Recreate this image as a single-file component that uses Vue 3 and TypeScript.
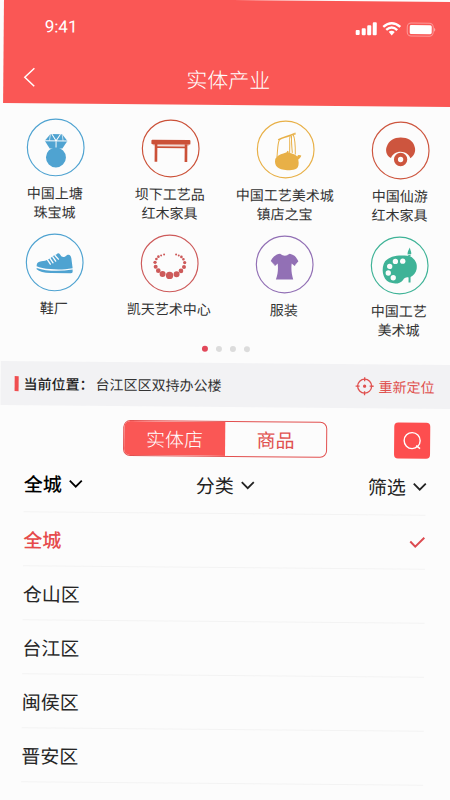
<script setup lang="ts">
import { ref } from 'vue'

interface Category {
  icon: string
  color: string
  lines: string[]
}

const categories: Category[] = [
  { icon: 'ring', color: '#4fa3d1', lines: ['中国上塘', '珠宝城'] },
  { icon: 'table', color: '#cb5138', lines: ['坝下工艺品', '红木家具'] },
  { icon: 'teapot', color: '#e8b047', lines: ['中国工艺美术城', '镇店之宝'] },
  { icon: 'mushroom', color: '#cd553e', lines: ['中国仙游', '红木家具'] },
  { icon: 'shoe', color: '#4fa3d1', lines: ['鞋厂'] },
  { icon: 'necklace', color: '#cd5a5a', lines: ['凯天艺术中心'] },
  { icon: 'shirt', color: '#9270b5', lines: ['服装'] },
  { icon: 'palette', color: '#3fb397', lines: ['中国工艺', '美术城'] },
]

const beads: number[][] = [
  [87, 123, 11], [66, 119, 9], [108, 119, 9], [53, 109, 7], [121, 109, 7],
  [45, 97, 6], [130, 97, 6], [43, 84, 5], [132, 84, 5], [47, 74, 4], [128, 74, 4],
  [53, 67, 4], [122, 67, 4], [61, 63, 3], [114, 63, 3], [70, 60, 3], [106, 60, 3],
]

const tabs = ['实体店', '商品']
const filters = ['全城', '分类', '筛选']
const areas = ['全城', '仓山区', '台江区', '闽侯区', '晋安区']

const activeTab = ref(0)
const activeFilter = ref(0)
const activeArea = ref(0)
const activeDot = ref(0)
</script>

<template>
  <div class="viewport">
    <main class="page">
      <header class="header">
        <div class="status">
          <span class="time">9:41</span>
          <svg class="status-icons" viewBox="0 0 80 16" aria-hidden="true">
            <g fill="#fff">
              <rect x="0" y="9" width="4" height="5" rx="1" />
              <rect x="6" y="7" width="4" height="7" rx="1" />
              <rect x="11.500" y="4" width="4" height="10" rx="1" />
              <rect x="17" y="1" width="4" height="13" rx="1" />
              <rect x="54" y="3.500" width="22" height="9" rx="1.500" />
              <path d="M78.500 6q2 2 0 4z" opacity=".6" />
              <path d="M33 10.500q3-2.400 6 0l-3 3.500z" />
            </g>
            <rect x="51.500" y="1.500" width="26" height="13" rx="4" fill="none" stroke="#fff" opacity=".4" />
            <g fill="none" stroke="#fff" stroke-width="2.400">
              <path d="M27.500 5.500q8.500-7.500 17 0" />
              <path d="M30.500 8.600q5.500-4.800 11 0" />
            </g>
          </svg>
        </div>
        <div class="title-bar">
          <button class="back" type="button" aria-label="返回">
            <svg viewBox="0 0 12 20"><path d="M11 1 1.500 10l9.500 9" /></svg>
          </button>
          <h1>实体产业</h1>
        </div>
      </header>

      <nav class="categories">
        <a v-for="c in categories" :key="c.icon" class="category" href="#">
          <svg class="badge" viewBox="0 0 174 174" :style="{ color: c.color }" aria-hidden="true">
            <circle cx="87" cy="87" r="85" fill="none" stroke="currentColor" stroke-width="3.500" />
            <g v-if="c.icon === 'ring'" fill="currentColor">
              <path d="M71 47h35l16 20-15 23H69L54 67z" />
              <circle cx="88" cy="117" r="30" />
              <path d="M54 67h68M75 47l13 20 13-20M88 67v20" fill="none" stroke="#fcfcfc" stroke-width="3" />
              <path d="M71 47l-3 20M106 47l3 20" fill="none" stroke="#fcfcfc" stroke-width="2" />
            </g>
            <g v-else-if="c.icon === 'table'" fill="currentColor">
              <rect x="29" y="61" width="117" height="14" rx="3" />
              <path d="M39 74h8v53h-8zM129 74h8v53h-8zM47 81h82v5H47z" />
              <path d="M34 75h108v3H34z" opacity=".5" />
            </g>
            <g v-else-if="c.icon === 'teapot'">
              <path d="M56 116c4-9 14-15 24-17l10-4 2-4 4 2v4c10 1 19 5 26 11 2-6 6-5 12-3-1 5-5 9-9 12 7 34-15 32-33 32-28 0-40-13-36-33z" fill="currentColor" />
              <path d="M61 110c2-18 1-40 7-52 9-7 27-9 49-18M64 58c13-10 28-9 52-21M101 44c-4 8-3 16-2 24v30M109 42c6 12 7 34 7 60M105 43c-3 8 0 31 2 54" fill="none" stroke="currentColor" stroke-width="3" />
            </g>
            <g v-else-if="c.icon === 'mushroom'">
              <path d="M58 110C43 102 41 86 45 76c7-20 22-28 42-28s38 9 42 28c4 13-1 26-13 34-4-11-15-19-29-19s-25 8-29 19z" fill="currentColor" />
              <circle cx="87" cy="114" r="14" fill="none" stroke="currentColor" stroke-width="12" />
            </g>
            <g v-else-if="c.icon === 'shoe'">
              <path d="M33 99c-1-9 5-14 14-15 16-1 26-8 36-17l10-5c3-4 7-3 10 1 5 10 14 9 20 2 8-3 12 0 14 10l4 29c-26 5-49 5-67 3-18-1-31-4-41-8z" fill="currentColor" />
              <path d="M33 104c28 10 70 10 108 4v8q-2 3-6 3H76q-32-1-43-11z" fill="currentColor" />
              <path d="m65 79 9 13M73 75l9 13M81 70l9 13M88 66l10 11" fill="none" stroke="#fcfcfc" stroke-width="4" stroke-linecap="round" />
            </g>
            <g v-else-if="c.icon === 'necklace'" fill="currentColor">
              <circle v-for="(b, i) in beads" :key="i" :cx="b[0]" :cy="b[1]" :r="b[2]" />
            </g>
            <g v-else-if="c.icon === 'shirt'">
              <path d="M73 55q14 11 29 0c13 3 19 8 26 22l-11 14-9-7c-2 17 0 32 5 48H61c6-16 7-32 5-48l-8 8-13-15c6-13 14-20 28-22z" fill="currentColor" />
              <path d="m47 80 11 10M127 80l-9 8" fill="none" stroke="#fcfcfc" stroke-width="2" stroke-dasharray="2 2" />
            </g>
            <g v-else>
              <path d="M43 75c14-16 39-20 67-17l8 1c15 8 23 22 20 38-2 12-10 21-18 24v17h-6v-15c-7-2-12 1-17 8-9 12-26 12-41 7-20-9-26-42-13-63z" fill="currentColor" />
              <path d="M114 60l-2-4c-4-6 0-12 5-23 2 10 7 16 3 22l-2 5z" fill="currentColor" />
              <path d="M111 54h10" stroke="#fcfcfc" stroke-width="2" />
              <g fill="#fcfcfc">
                <circle cx="74" cy="75" r="8" /><circle cx="96" cy="74" r="8" />
                <circle cx="57" cy="90" r="8" /><circle cx="53" cy="110" r="8" /><circle cx="68" cy="124" r="8" />
              </g>
            </g>
          </svg>
          <span class="label"><span v-for="l in c.lines" :key="l">{{ l }}</span></span>
        </a>
      </nav>

      <div class="dots">
        <button
          v-for="n in 4"
          :key="n"
          type="button"
          class="dot"
          :class="{ active: activeDot === n - 1 }"
          :aria-label="`${n}`"
          @click="activeDot = n - 1"
        ></button>
      </div>

      <section class="location">
        <span class="accent"></span>
        <span class="location-name">当前位置：</span>
        <span class="location-value">台江区区双持办公楼</span>
        <button class="relocate" type="button">
          <svg viewBox="0 0 18 18" aria-hidden="true">
            <circle cx="9" cy="9" r="7" />
            <path d="M9 0v4M9 14v4M0 9h4M14 9h4" />
            <circle cx="9" cy="9" r="1" fill="currentColor" />
          </svg>
          重新定位
        </button>
      </section>

      <section class="switch-row">
        <div class="tabs">
          <button
            v-for="(t, i) in tabs"
            :key="t"
            type="button"
            :class="{ active: activeTab === i }"
            @click="activeTab = i"
          >{{ t }}</button>
        </div>
        <button class="search" type="button" aria-label="搜索">
          <svg viewBox="0 0 36 36"><circle cx="18" cy="18" r="8" /><path d="m22 23 4 3" /></svg>
        </button>
      </section>

      <section class="filters">
        <button
          v-for="(f, i) in filters"
          :key="f"
          type="button"
          :class="{ active: activeFilter === i }"
          @click="activeFilter = i"
        >
          {{ f }}
          <svg viewBox="0 0 12 8" aria-hidden="true"><path d="m0 1 6 6 6-6" /></svg>
        </button>
      </section>

      <ul class="areas">
        <li v-for="(a, i) in areas" :key="a">
          <button type="button" :class="{ active: activeArea === i }" @click="activeArea = i">
            {{ a }}
            <svg v-if="activeArea === i" viewBox="0 0 16 12" aria-hidden="true"><path d="m1 5 5 5 9-9" /></svg>
          </button>
        </li>
      </ul>
    </main>
  </div>
</template>

<style>
body {
  margin: 0;
  background: #fcfcfc;
}
</style>

<style scoped>
.viewport {
  min-height: 100vh;
  max-height: 100vh;
  overflow: hidden;
  background: #fcfcfc;
  font-family: "Noto Sans CJK SC", sans-serif;
  color: #333;
}

/* The whole sheet leans slightly clockwise. */
.page {
  margin: -2px 0 0 4px;
  width: 100%;
  transform: rotate(0.5deg);
  transform-origin: 0 0;
}

button {
  margin: 0;
  padding: 0;
  border: 0;
  background: none;
  font: inherit;
  color: inherit;
  cursor: pointer;
}

svg {
  display: block;
  flex: none;
  overflow: visible;
}

.header {
  box-sizing: border-box;
  height: 105px;
  padding-top: 14px;
  background: #fa5755;
  color: #fff;
}

.status {
  display: flex;
  align-items: center;
  justify-content: space-between;
  height: 28px;
  padding: 0 18px 0 41px;
}

.time {
  font-family: Roboto, sans-serif;
  font-size: 17px;
  line-height: 28px;
}

.status-icons {
  width: 80px;
  height: 16px;
}

.title-bar {
  display: grid;
  grid-template-columns: 1fr auto 1fr;
  align-items: center;
  height: 32px;
  margin-top: 21px;
  padding: 0 20px;
}

.back {
  justify-self: start;
}

.back svg {
  width: 12px;
  height: 20px;
  fill: none;
  stroke: #fff;
  stroke-width: 1.5;
}

h1 {
  margin: 0;
  font-size: 21px;
  line-height: 32px;
  font-weight: 300;
}

.categories {
  display: grid;
  grid-template-columns: repeat(4, 1fr);
  row-gap: 12px;
  margin: 0 -5px;
  padding-top: 15px;
}

.category {
  display: flex;
  flex-direction: column;
  align-items: center;
  gap: 7px;
  color: inherit;
  text-decoration: none;
}

.badge {
  width: 58px;
  height: 58px;
}

.label {
  display: flex;
  flex-direction: column;
  align-items: center;
  font-size: 14px;
  line-height: 19px;
  white-space: nowrap;
}

.dots {
  display: flex;
  justify-content: center;
  gap: 8px;
  padding: 8px 0 11px;
}

.dot {
  width: 6px;
  height: 6px;
  border-radius: 50%;
  background: #dcdcdc;
}

.dot.active {
  background: #e2485a;
}

.location {
  display: flex;
  align-items: center;
  height: 44px;
  padding: 0 16px 0 14px;
  background: #f2f2f4;
  font-size: 14px;
  line-height: 20px;
  white-space: nowrap;
}

.accent {
  width: 4px;
  height: 15px;
  margin-right: 5px;
  background: #f04e50;
}

.location-name {
  font-weight: 500;
  color: #222;
}

.location-value {
  margin-left: 2px;
}

.relocate {
  display: flex;
  align-items: center;
  gap: 5px;
  margin-left: auto;
  color: #e0514f;
}

.relocate svg {
  width: 18px;
  height: 18px;
  fill: none;
  stroke: currentColor;
  stroke-width: 1.3;
}

.switch-row {
  display: grid;
  grid-template-columns: 1fr 204px 1fr;
  align-items: center;
  padding: 14px 20px 0;
}

.tabs {
  grid-column: 2;
  box-sizing: border-box;
  display: flex;
  height: 36px;
  overflow: hidden;
  border: 1px solid #e2504f;
  border-radius: 7px;
}

.tabs button {
  flex: 1;
  font-size: 19px;
  line-height: 34px;
  color: #e0514f;
}

.tabs button.active {
  background: #fa5755;
  color: #fff;
  font-weight: 300;
}

.search {
  justify-self: end;
  width: 36px;
  height: 36px;
  border-radius: 4px;
  background: #fd4e4f;
}

.search svg {
  width: 36px;
  height: 36px;
  fill: none;
  stroke: #fff;
  stroke-width: 1.4;
}

.filters {
  display: flex;
  align-items: center;
  justify-content: space-between;
  height: 56px;
  padding: 0 24px;
}

.filters button {
  display: flex;
  align-items: center;
  gap: 8px;
  font-size: 19px;
  line-height: 28px;
  color: #222;
}

.filters button.active {
  font-weight: 500;
  color: #000;
}

.filters svg {
  width: 12px;
  height: 8px;
  fill: none;
  stroke: currentColor;
  stroke-width: 1.8;
}

.areas {
  margin: 0 24px;
  padding: 0;
  list-style: none;
  border-bottom: 1px solid #f3f3f3;
}

.areas li {
  border-top: 1px solid #f3f3f3;
}

.areas button {
  display: flex;
  align-items: center;
  justify-content: space-between;
  width: 100%;
  height: 53px;
  font-size: 19px;
  line-height: 28px;
  color: #262626;
}

.areas button.active {
  color: #e64a4b;
  font-weight: 500;
}

.areas svg {
  width: 16px;
  height: 12px;
  fill: none;
  stroke: #dc4a50;
  stroke-width: 2;
}
</style>
